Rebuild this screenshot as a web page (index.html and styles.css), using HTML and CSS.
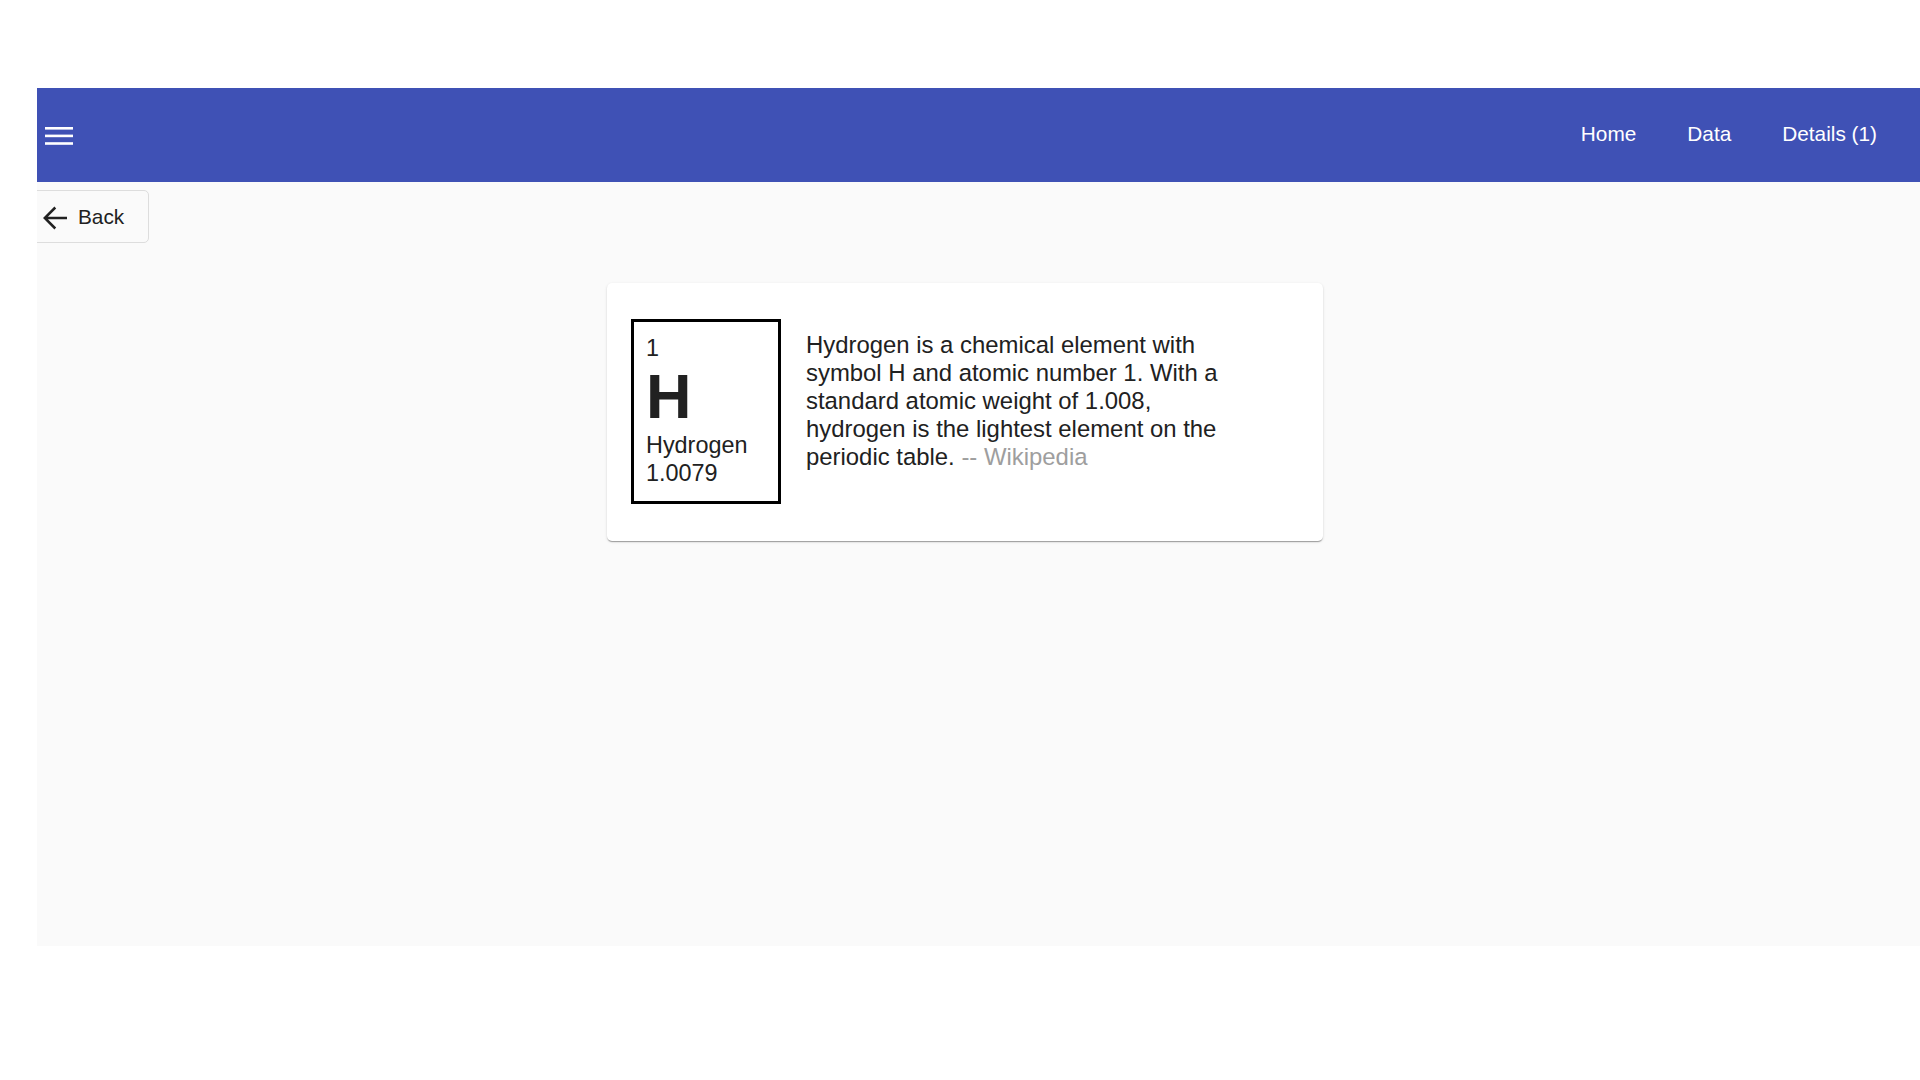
FILE: index.html
```html
<!DOCTYPE html>
<html lang="en">
<head>
<meta charset="utf-8">
<title>Hydrogen</title>
<link rel="stylesheet" href="styles.css">
</head>
<body>
<div class="app">
  <header class="toolbar">
    <button class="menu-btn" aria-label="Menu">
      <svg width="28" height="18" viewBox="0 0 28 18"><rect x="0" y="0" width="28" height="2.6" fill="#fff"/><rect x="0" y="7.6" width="28" height="2.6" fill="#fff"/><rect x="0" y="15.2" width="28" height="2.6" fill="#fff"/></svg>
    </button>
    <div class="spacer"></div>
    <nav class="nav">
      <a class="nav-item" href="#">Home</a>
      <a class="nav-item" href="#">Data</a>
      <a class="nav-item" href="#">Details (1)</a>
    </nav>
  </header>
  <section class="content">
    <button class="back-btn">
      <svg width="24" height="24" viewBox="0 0 24 24"><path d="M24 12H1.8M12.3 1.5L1.8 12L12.3 22.5" fill="none" stroke="#212121" stroke-width="2.5"/></svg>
      <span>Back</span>
    </button>
    <div class="main">
      <div class="card">
        <div class="element">
          <div class="el-num">1</div>
          <div class="el-sym">H</div>
          <div class="el-name">Hydrogen</div>
          <div class="el-mass">1.0079</div>
        </div>
        <p class="desc">Hydrogen is a chemical element with symbol H and atomic number 1. With a standard atomic weight of 1.008, hydrogen is the lightest element on the periodic table. <span class="source">-- Wikipedia</span></p>
      </div>
    </div>
  </section>
</div>
</body>
</html>
```

FILE: styles.css
```css
html, body {
  margin: 0;
  padding: 0;
  background: #ffffff;
  overflow: hidden;
}
body {
  font-family: "Liberation Sans", Arial, sans-serif;
  font-size: 20.8px;
  color: #212121;
}
.app {
  margin: 88px 0 0 37px;
  height: 858px;
  background: #fafafa;
  overflow: hidden;
  display: flex;
  flex-direction: column;
}
.toolbar {
  flex: 0 0 94px;
  height: 94px;
  background: #3f51b5;
  display: flex;
  align-items: center;
  padding: 0 17.5px 0 8px;
  box-sizing: border-box;
  color: #fff;
}
.menu-btn {
  background: none;
  border: 0;
  padding: 0;
  margin: 1px 0 0;
  display: flex;
  align-items: center;
  cursor: pointer;
}
.menu-btn svg { display: block; }
.spacer { flex: 1; }
.nav { display: flex; align-items: center; }
.nav-item {
  color: #fff;
  text-decoration: none;
  padding: 0 25.5px 2px;
  line-height: 28px;
  font-size: 20.8px;
}
.content {
  flex: 1;
  display: flex;
  flex-direction: column;
  align-items: flex-start;
}
.back-btn {
  margin: 8px 0 0 -12px;
  display: inline-flex;
  align-items: center;
  background: transparent;
  border: 1px solid #dddddd;
  border-radius: 5px;
  padding: 11.5px 24px 11.5px 17px;
  font-family: "Liberation Sans", Arial, sans-serif;
  font-size: 20.8px;
  line-height: 28px;
  color: #212121;
  gap: 11px;
}
.back-btn svg { display: block; margin-top: 3px; }
.main {
  align-self: stretch;
  display: flex;
  justify-content: flex-start;
  padding-left: 570px;
  margin-top: 40px;
}
.card {
  width: 716px;
  box-sizing: border-box;
  background: #fff;
  border-radius: 5px;
  padding: 36px 24px 37px;
  display: flex;
  align-items: flex-start;
  gap: 25px;
  box-shadow: 0 2px 1px -1px rgba(0,0,0,0.2), 0 1px 1px 0 rgba(0,0,0,0.14), 0 1px 3px 0 rgba(0,0,0,0.12);
}
.element {
  width: 150px;
  height: 185px;
  box-sizing: border-box;
  border: 3px solid #000;
  padding: 11.6px 12px;
  font-size: 23.4px;
  line-height: 28px;
  flex: 0 0 auto;
}
.el-sym {
  font-weight: bold;
  font-size: 63px;
  line-height: 69px;
}
.desc {
  margin: 12px 0 0;
  width: 430px;
  font-size: 23.9px;
  line-height: 28px;
}
.source { color: #9e9e9e; }
```
